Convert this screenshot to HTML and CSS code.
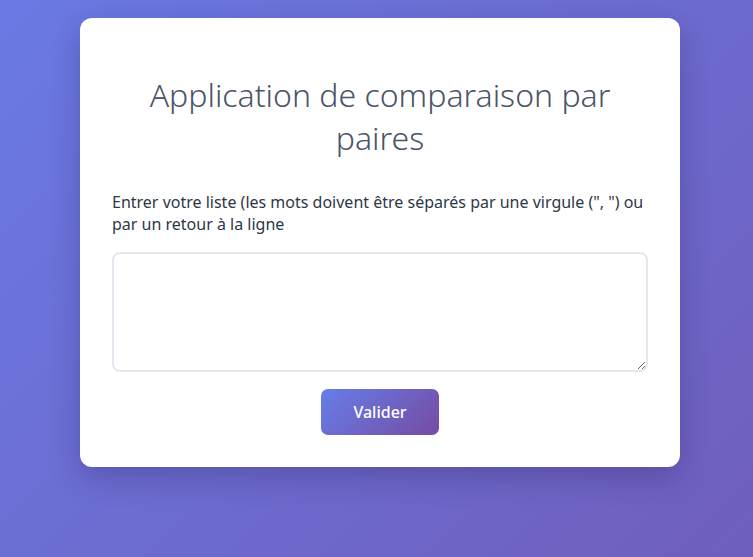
FILE: index.html
```html
<!DOCTYPE html>
<html lang="fr">
<head>
  <meta charset="UTF-8" />
  <meta name="viewport" content="width=device-width, initial-scale=1.0" />
  <title>Comparaison par paires</title>
  <link rel="stylesheet" href="styles.css">
</head>
<body>
  <main class="card">
    <h1>Application de comparaison par paires</h1>
    <label for="liste">Entrer votre liste (les mots doivent être séparés par une virgule (", ") ou par un retour à la ligne</label>
    <textarea id="liste"></textarea>
    <button class="btn">Valider</button>
  </main>
</body>
</html>
```

FILE: styles.css
```css
html, body {
  height: 100%;
}
body {
  margin: 0;
  font-family: 'Noto Sans', 'Open Sans', sans-serif;
  background: linear-gradient(135deg, #6a7ae4 0%, #6f5ebd 100%);
  overflow: hidden;
}
.card {
  box-sizing: border-box;
  width: 600px;
  margin: 18px 0 0 80px;
  padding: 32px;
  background: #fff;
  border-radius: 12px;
  box-shadow: 0 10px 30px rgba(40, 30, 90, 0.3);
  display: flex;
  flex-direction: column;
}
.card h1 {
  margin: 23px 0 32px;
  font-size: 32px;
  font-weight: 300;
  line-height: 43px;
  color: #4a5568;
  text-align: center;
}
.card label {
  font-size: 16px;
  line-height: 22px;
  color: #2d3748;
}
.card textarea {
  margin-top: 17px;
  height: 120px;
  box-sizing: border-box;
  border: 2px solid #e2e8f0;
  border-radius: 8px;
  padding: 10px;
  font-family: inherit;
  font-size: 16px;
}
.btn {
  align-self: center;
  margin-top: 17px;
  width: 118px;
  height: 46px;
  border: none;
  border-radius: 7px;
  background: linear-gradient(135deg, #667eea 0%, #764ba2 100%);
  color: #fff;
  font-family: inherit;
  font-size: 16px;
  font-weight: 500;
  cursor: pointer;
}
```
